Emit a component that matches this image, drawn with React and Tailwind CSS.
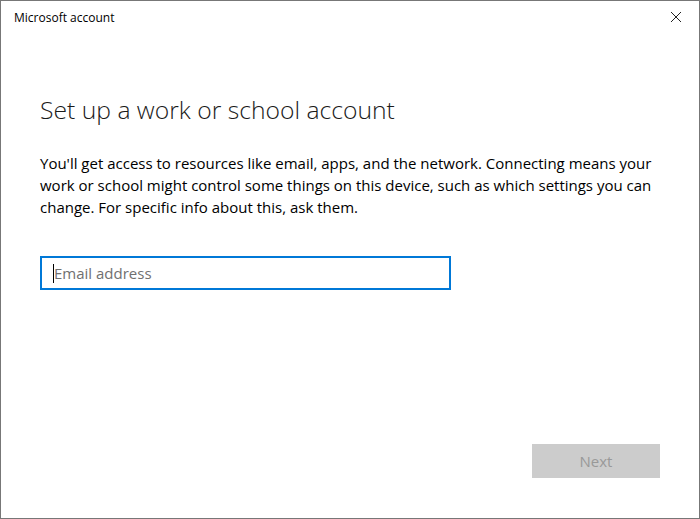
import React from 'react';

const App = () => {
  return (
    <div className="w-[700px] h-[519px] bg-white border border-[#777777] flex flex-col text-black">
      {/* title bar */}
      <div className="h-[34px] flex items-center justify-between pl-[13px] pr-[17px] font-['Open_Sans',sans-serif] text-[12px]">
        <span>Microsoft account</span>
        <svg width="12" height="12" viewBox="0 0 12 12" className="mt-[-2px]">
          <path d="M1 1 L11 11 M11 1 L1 11" stroke="#222" strokeWidth="1" />
        </svg>
      </div>

      <div className="flex-1 flex flex-col pl-[39px] pr-[40px] font-['Open_Sans',sans-serif]">
        <h1 className="mt-[59px] text-[24.7px] font-light leading-[32px] text-[#1a1a1a]">Set up a work or school account</h1>
        <p className="mt-[26px] text-[15px] leading-[22px] w-[625px]">
          You'll get access to resources like email, apps, and the network. Connecting means your work or school might control some things on this device, such as which settings you can change. For specific info about this, ask them.
        </p>
        <div className="mt-[38px] w-[411px] h-[34px] border-2 border-[#0078d7] flex items-center pl-[11px]">
          <span className="w-px h-[19px] bg-black"></span>
          <span className="text-[15px] text-[#707070]">Email address</span>
        </div>
        <div className="flex-1"></div>
        <div className="flex justify-end mb-[40px]">
          <button className="w-[128px] h-[34px] bg-[#cccccc] text-[#999999] text-[15px] mr-[-1px]">Next</button>
        </div>
      </div>
    </div>
  );
};

export default App;
